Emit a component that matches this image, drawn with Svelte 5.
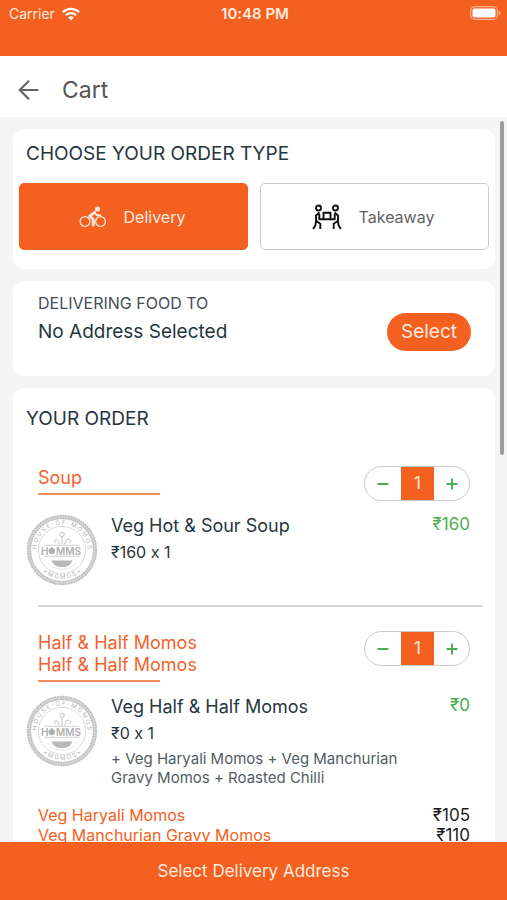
<script>
  let orderType = $state('delivery');

  let items = $state([
    {
      category: ['Soup'],
      name: 'Veg Hot & Sour Soup',
      price: 160,
      qty: 1,
      note: '',
      addons: []
    },
    {
      category: ['Half & Half Momos', 'Half & Half Momos'],
      name: 'Veg Half & Half Momos',
      price: 0,
      qty: 1,
      note: '+ Veg Haryali Momos + Veg Manchurian Gravy Momos + Roasted Chilli',
      addons: [
        { name: 'Veg Haryali Momos', price: 105 },
        { name: 'Veg Manchurian Gravy Momos', price: 110 }
      ]
    }
  ]);

  function decrease(item) {
    if (item.qty > 1) item.qty -= 1;
  }

  function increase(item) {
    item.qty += 1;
  }
</script>

{#snippet stamp()}
  <svg class="stamp" viewBox="0 0 72 72" aria-hidden="true">
    <defs>
      <path id="ring-top" d="M12.6 46.5A25.6 25.6 0 1 1 59.4 46.5" />
      <path id="ring-bottom" d="M10.2 49.5A29.4 29.4 0 0 0 61.8 49.5" />
    </defs>
    <circle cx="36" cy="36" r="33" fill="none" stroke="#d4d4d4" stroke-width="3.8" />
    <circle cx="36" cy="36" r="33" fill="none" stroke="#bcbcbc" stroke-width="4.4" stroke-dasharray="1.4 1.2" />
    <circle cx="36" cy="36" r="33" fill="none" stroke="#dedede" stroke-width="1.2" stroke-dasharray="1.2 1.4" />
    <circle cx="36" cy="36" r="23.6" fill="none" stroke="#d0d0d0" stroke-width="0.8" />
    <text class="ring-text"><textPath href="#ring-top" startOffset="50%">H O U S E · O F · M O M O S</textPath></text>
    <text class="ring-text"><textPath href="#ring-bottom" startOffset="50%">• M O M O S •</textPath></text>
    <g fill="none" stroke="#c4c4c4" stroke-width="1" stroke-linecap="round">
      <circle cx="36" cy="20.5" r="2.2" />
      <path d="M36 30v-7M33 30c0-3-1-4-3-4.200s-3 3 -.6 3M39 30c0-3 1-4.500 3.500-4.800s3.500 3.300 .8 3.300" />
      <path d="M19 31.300h34M19 42.300h34" stroke-width="0.8" />
    </g>
    <path d="M25.500 46.500h21c-1.500 4.600-5.700 6.600-10.500 6.600s-9-2-10.500-6.600z" fill="#b8b8b8" />
    <path d="M21 48a19 19 0 0 0 30 0" fill="none" stroke="#dedede" stroke-width="0.700" />
    <text class="brand" x="15" y="40.500">H</text>
    <path d="M25.800 32.500l.9 1.600c1.700.6 2.400 1.800 2.400 3 0 1.900-1.400 3.100-3.300 3.100s-3.300-1.200-3.300-3.100c0-1.200.7-2.400 2.400-3z" fill="#b0b0b0" />
    <text class="brand" x="30" y="40.500">MMS</text>
  </svg>
{/snippet}

<div class="screen">
  <div class="status-bar">
    <span class="carrier">
      Carrier
      <svg width="18" height="14" viewBox="0 0 18 14" aria-hidden="true">
        <g fill="none" stroke="#fff" stroke-width="2.300">
          <path d="M.9 5.100a11.600 11.600 0 0 1 16.200 0" />
          <path d="M3.900 8.300a7.300 7.300 0 0 1 10.200 0" />
        </g>
        <path d="M6.200 10.700a4 4 0 0 1 5.600 0L9 13.600z" fill="#fff" />
      </svg>
    </span>
    <span class="clock">10:48 PM</span>
    <span class="battery">
      <svg width="31" height="14" viewBox="0 0 31 14" aria-hidden="true">
        <rect x=".7" y=".7" width="26.600" height="12.600" rx="3.800" fill="none" stroke="#fff" stroke-opacity=".5" stroke-width="1.200" />
        <rect x="2.500" y="2.500" width="23" height="9" rx="2" fill="#fff" />
        <path d="M28.700 4.800q2 .6 2 2.200t-2 2.200z" fill="#fff" fill-opacity=".5" />
      </svg>
    </span>
  </div>

  <header>
    <button class="back" aria-label="Back">
      <svg width="22" height="22" viewBox="0 0 22 22" aria-hidden="true">
        <path d="M20.300 11H2M11 1.800L1.800 11l9.200 9.200" fill="none" stroke="#636363" stroke-width="2.200" />
      </svg>
    </button>
    <h1>Cart</h1>
  </header>

  <div class="body">
    <main>
      <section class="card type-card">
        <h2>CHOOSE YOUR ORDER TYPE</h2>
        <div class="types">
          <button class:active={orderType === 'delivery'} onclick={() => (orderType = 'delivery')}>
            <svg width="28" height="22" viewBox="0 0 28 22" aria-hidden="true">
              <g fill="none" stroke="currentColor">
                <circle cx="6" cy="15.500" r="4.900" stroke-width="1.200" />
                <circle cx="21.500" cy="15.500" r="4.900" stroke-width="1.200" />
                <path d="M15.500 6.500l-4.800 3.600 3.600 3.400v5.500" stroke-width="2.800" stroke-linejoin="round" stroke-linecap="round" />
                <path d="M15.500 6l2.200 3.300h3.800" stroke-width="1.900" stroke-linecap="round" stroke-linejoin="round" />
              </g>
              <circle cx="18.500" cy="3" r="2.500" fill="currentColor" />
            </svg>
            Delivery
          </button>
          <button class:active={orderType === 'takeaway'} onclick={() => (orderType = 'takeaway')}>
            <svg width="30" height="26" viewBox="0 0 30 26" aria-hidden="true">
              <g fill="none" stroke="#111" stroke-width="1.900" stroke-linejoin="round">
                <circle cx="6.500" cy="4" r="2.500" />
                <circle cx="23.500" cy="4" r="2.500" />
                <rect x="11.500" y="8.800" width="7" height="6.400" />
                <path d="M11.500 15.200H7.300V10M18.500 15.200h4.200V10" />
                <path d="M7.500 8.500L4 11.500v5.200l4.300 3V25M4 17.500l-.5 3.500L1.200 25" />
                <path d="M22.500 8.500l3.500 3v5.200l-4.300 3V25M26 17.500l.5 3.500 2.300 4" />
              </g>
            </svg>
            Takeaway
          </button>
        </div>
      </section>

      <section class="card address">
        <div>
          <p class="label">DELIVERING FOOD TO</p>
          <p class="value">No Address Selected</p>
        </div>
        <button>Select</button>
      </section>

      <section class="card order">
        <h2>YOUR ORDER</h2>
        {#each items as item}
          <article>
            <div class="item-head">
              <h3>
                {#each item.category as line}
                  <span>{line}</span>
                {/each}
              </h3>
              <div class="stepper">
                <button aria-label="Remove one" onclick={() => decrease(item)}>
                  <svg width="12" height="12" viewBox="0 0 12 12" aria-hidden="true"><path d="M.5 6h11" /></svg>
                </button>
                <span>{item.qty}</span>
                <button aria-label="Add one" onclick={() => increase(item)}>
                  <svg width="12" height="12" viewBox="0 0 12 12" aria-hidden="true"><path d="M.5 6h11M6 .5v11" /></svg>
                </button>
              </div>
            </div>

            <div class="item-body">
              {@render stamp()}
              <div class="item-info">
                <p class="name">{item.name}</p>
                <p class="count">₹{item.price} x {item.qty}</p>
                {#if item.note}
                  <p class="note">{item.note}</p>
                {/if}
              </div>
              <span class="total">₹{item.price * item.qty}</span>
            </div>

            {#if item.addons.length}
              <ul>
                {#each item.addons as addon}
                  <li><span>{addon.name}</span><b>₹{addon.price}</b></li>
                {/each}
              </ul>
            {/if}
          </article>
        {/each}
      </section>
    </main>
    <div class="scroll-thumb"></div>
  </div>

  <button class="checkout">Select Delivery Address</button>
</div>

<style>
  :global(body) {
    margin: 0;
  }

  .screen {
    display: flex;
    flex-direction: column;
    height: 100vh;
    overflow: hidden;
    font-family: Inter, Roboto, sans-serif;
    /* keeps "160 x 1" from turning into a multiplication sign */
    font-variant-ligatures: no-contextual;
    color: #263640;
    background: #f5f5f5;
  }

  .screen * {
    box-sizing: border-box;
  }

  button {
    font: inherit;
    border: 0;
    padding: 0;
    background: none;
    cursor: pointer;
  }

  h1,
  h2,
  h3,
  p,
  ul {
    margin: 0;
    padding: 0;
    font-weight: 400;
  }

  svg {
    display: block;
    flex: none;
  }

  .status-bar {
    display: grid;
    grid-template-columns: 1fr auto 1fr;
    align-items: start;
    height: 56px;
    flex: none;
    padding: 4px 6px 0 9px;
    background: #f46020;
    color: #ffeadf;
    font-size: 15px;
    line-height: 20px;
  }

  .carrier {
    display: flex;
    align-items: center;
    gap: 7px;
    font-size: 14px;
  }

  .clock {
    font-weight: 600;
  }

  .battery {
    justify-self: end;
    padding-top: 2px;
  }

  header {
    display: flex;
    align-items: center;
    gap: 22px;
    flex: none;
    height: 61px;
    padding: 6px 18px 0;
    background: #fff;
    color: #555;
  }

  h1 {
    font-size: 23px;
    line-height: 28px;
  }

  .body {
    position: relative;
    flex: 1;
    min-height: 0;
  }

  main {
    display: flex;
    flex-direction: column;
    gap: 12px;
    height: 100%;
    padding: 12px 12px 0 13px;
    overflow-y: auto;
    scrollbar-width: none;
  }

  .scroll-thumb {
    position: absolute;
    top: 4px;
    right: 3px;
    width: 4px;
    height: 46%;
    border-radius: 2px;
    background: #9c9c9c;
  }

  .card {
    flex: none;
    border-radius: 12px;
    background: #fff;
  }

  h2 {
    font-size: 19px;
    line-height: 24px;
  }

  .type-card {
    padding: 13px 6px 19px;
  }

  .type-card h2 {
    padding-left: 7px;
  }

  .types {
    display: grid;
    grid-template-columns: 1fr 1fr;
    gap: 12px;
    margin-top: 17px;
  }

  .types button {
    display: flex;
    align-items: center;
    justify-content: center;
    gap: 17px;
    height: 67px;
    padding-right: 3px;
    border: 1px solid #ccc;
    border-radius: 5px;
    font-size: 16px;
    color: #636363;
  }

  .types .active {
    border-color: #f46020;
    background: #f46020;
    color: #ffeadf;
  }

  .address {
    display: flex;
    justify-content: space-between;
    align-items: flex-start;
    padding: 12px 24px 25px 25px;
  }

  .label {
    font-size: 16px;
    line-height: 20px;
    color: #424d55;
  }

  .value {
    margin-top: 5px;
    font-size: 19px;
    line-height: 28px;
  }

  .address button {
    margin-top: 20px;
    height: 38px;
    padding: 0 14px;
    border-radius: 19px;
    background: #f46020;
    color: #ffeadf;
    font-size: 19px;
    line-height: 28px;
  }

  .order {
    padding: 19px 12px 24px 13px;
  }

  .order h2 {
    margin-bottom: 17px;
  }

  article {
    padding-top: 18px;
  }

  article + article {
    margin: 19px 0 0 12px;
    padding-top: 24px;
    border-top: 2px solid #d6d6d6;
  }

  article:first-of-type .item-head,
  article:first-of-type ul {
    margin-left: 12px;
  }

  .item-head {
    display: flex;
    justify-content: space-between;
    align-items: flex-start;
    padding-right: 13px;
  }

  h3 {
    min-width: 122px;
    padding: 1px 0 6px;
    font-size: 18px;
    line-height: 22px;
    color: #f2622a;
    background: linear-gradient(#f28a5e, #f28a5e) left bottom / 122px 2px no-repeat;
  }

  h3 span {
    display: block;
  }

  .stepper {
    display: grid;
    grid-template-columns: 36px 33px 35px;
    height: 35px;
    border: 1px solid #ccc;
    border-radius: 18px;
    overflow: hidden;
  }

  .stepper span {
    background: #f46020;
    color: #ffeadf;
    font-size: 17px;
    line-height: 33px;
    text-align: center;
  }

  .stepper button {
    display: grid;
    place-items: center;
  }

  .stepper path {
    stroke: #4caf50;
    stroke-width: 2;
  }

  .item-body {
    display: flex;
    align-items: flex-start;
    padding: 11px 13px 0 0;
  }

  article + article .item-body {
    margin-left: -12px;
  }

  .stamp {
    width: 72px;
    height: 72px;
    margin-top: 2px;
  }

  .ring-text {
    font-size: 6px;
    fill: #b4b4b4;
    text-anchor: middle;
  }

  .brand {
    font-size: 10px;
    font-weight: 600;
    fill: #b0b0b0;
  }

  .item-info {
    flex: 1;
    padding: 0 24px 0 13px;
  }

  .name {
    font-size: 18px;
    line-height: 28px;
  }

  .count {
    font-size: 16px;
    line-height: 24px;
  }

  .note {
    margin-top: 4px;
    font-size: 15px;
    line-height: 19px;
    color: #525c63;
  }

  .total {
    font-size: 17px;
    line-height: 24px;
    color: #4caf50;
  }

  ul {
    padding: 18px 13px 0 0;
    list-style: none;
  }

  li {
    display: flex;
    justify-content: space-between;
    font-size: 16px;
    line-height: 20px;
    color: #f46020;
  }

  li b {
    font-size: 17px;
    font-weight: 400;
    color: #1c1c1c;
  }

  .checkout {
    flex: none;
    height: 58px;
    background: #f46020;
    color: #ffeadf;
    font-size: 17px;
    line-height: 24px;
  }
</style>
